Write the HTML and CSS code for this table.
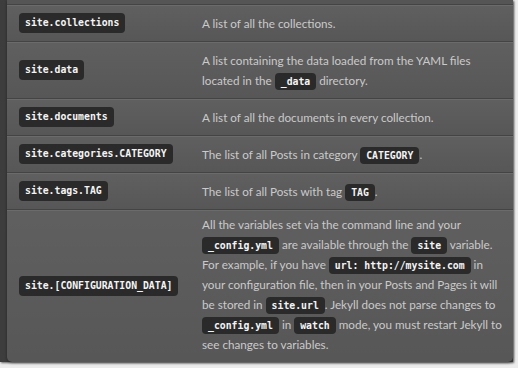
FILE: index.html
```html
<!DOCTYPE html>
<html>
<head>
<meta charset="utf-8">
<link rel="stylesheet" href="styles.css">
</head>
<body>
<div class="frame">
  <div class="table">
    <div class="stub"></div>
    <div class="row">
      <div class="name"><code class="tag">site.collections</code></div>
      <div class="desc">A list of all the collections.</div>
    </div>
    <div class="row">
      <div class="name"><code class="tag">site.data</code></div>
      <div class="desc">A list containing the data loaded from the YAML files located in the <code>_data</code> directory.</div>
    </div>
    <div class="row">
      <div class="name"><code class="tag">site.documents</code></div>
      <div class="desc">A list of all the documents in every collection.</div>
    </div>
    <div class="row">
      <div class="name"><code class="tag">site.categories.CATEGORY</code></div>
      <div class="desc">The list of all Posts in category <code>CATEGORY</code>.</div>
    </div>
    <div class="row">
      <div class="name"><code class="tag">site.tags.TAG</code></div>
      <div class="desc">The list of all Posts with tag <code>TAG</code>.</div>
    </div>
    <div class="row last">
      <div class="name"><code class="tag">site.[CONFIGURATION_DATA]</code></div>
      <div class="desc">All the variables set via the command line and your <code>_config.yml</code> are available through the <code>site</code> variable. For example, if you have <code>url: http://mysite.com</code> in your configuration file, then in your Posts and Pages it will be stored in <code>site.url</code>. Jekyll does not parse changes to <code>_config.yml</code> in <code>watch</code> mode, you must restart Jekyll to see changes to variables.</div>
    </div>
  </div>
</div>
</body>
</html>
```
FILE: styles.css
```css
html, body {
  margin: 0;
  padding: 0;
  background: #ececec;
  width: 518px;
  height: 368px;
  overflow: hidden;
}
.frame {
  width: 506px;
  height: 362px;
  background: #3d3d3d;
  padding-left: 7px;
  box-shadow: 1px 1px 2px rgba(0,0,0,.6);
}
.table {
  width: 506px;
  background: #575757;
  border-radius: 0 0 5px 5px;
  box-shadow: 0 1px 3px rgba(0,0,0,.4);
  font-family: Lato, "Open Sans", sans-serif;
  font-weight: 400;
  font-size: 11.7px;
  line-height: 20px;
  color: #cacaca;
}
.stub {
  height: 4px;
  background: #555;
}
.row {
  display: grid;
  grid-template-columns: 183px 1fr;
  border-top: 1px solid #444;
  box-shadow: inset 0 1px 0 rgba(255,255,255,.08);
  background-image: linear-gradient(rgba(255,255,255,.05), rgba(255,255,255,0));
}
.row.last {
  border-radius: 0 0 5px 5px;
}
.name {
  padding: 8px 12px;
  display: flex;
  align-items: center;
}
.desc {
  padding: 8px 8px 8px 12px;
  align-self: center;
}
.last .desc {
  padding-top: 4px;
  padding-bottom: 8px;
}
code {
  font-family: "DejaVu Sans Mono", monospace;
  font-weight: bold;
  font-size: 9.8px;
  line-height: 12px;
  color: #f4f4f4;
  background: #2a2a2a;
  border-radius: 4px;
  padding: 3px 6px;
  white-space: nowrap;
}
code.tag {
  display: inline-block;
  padding: 0 6px;
  line-height: 20px;
  height: 20px;
}
```
